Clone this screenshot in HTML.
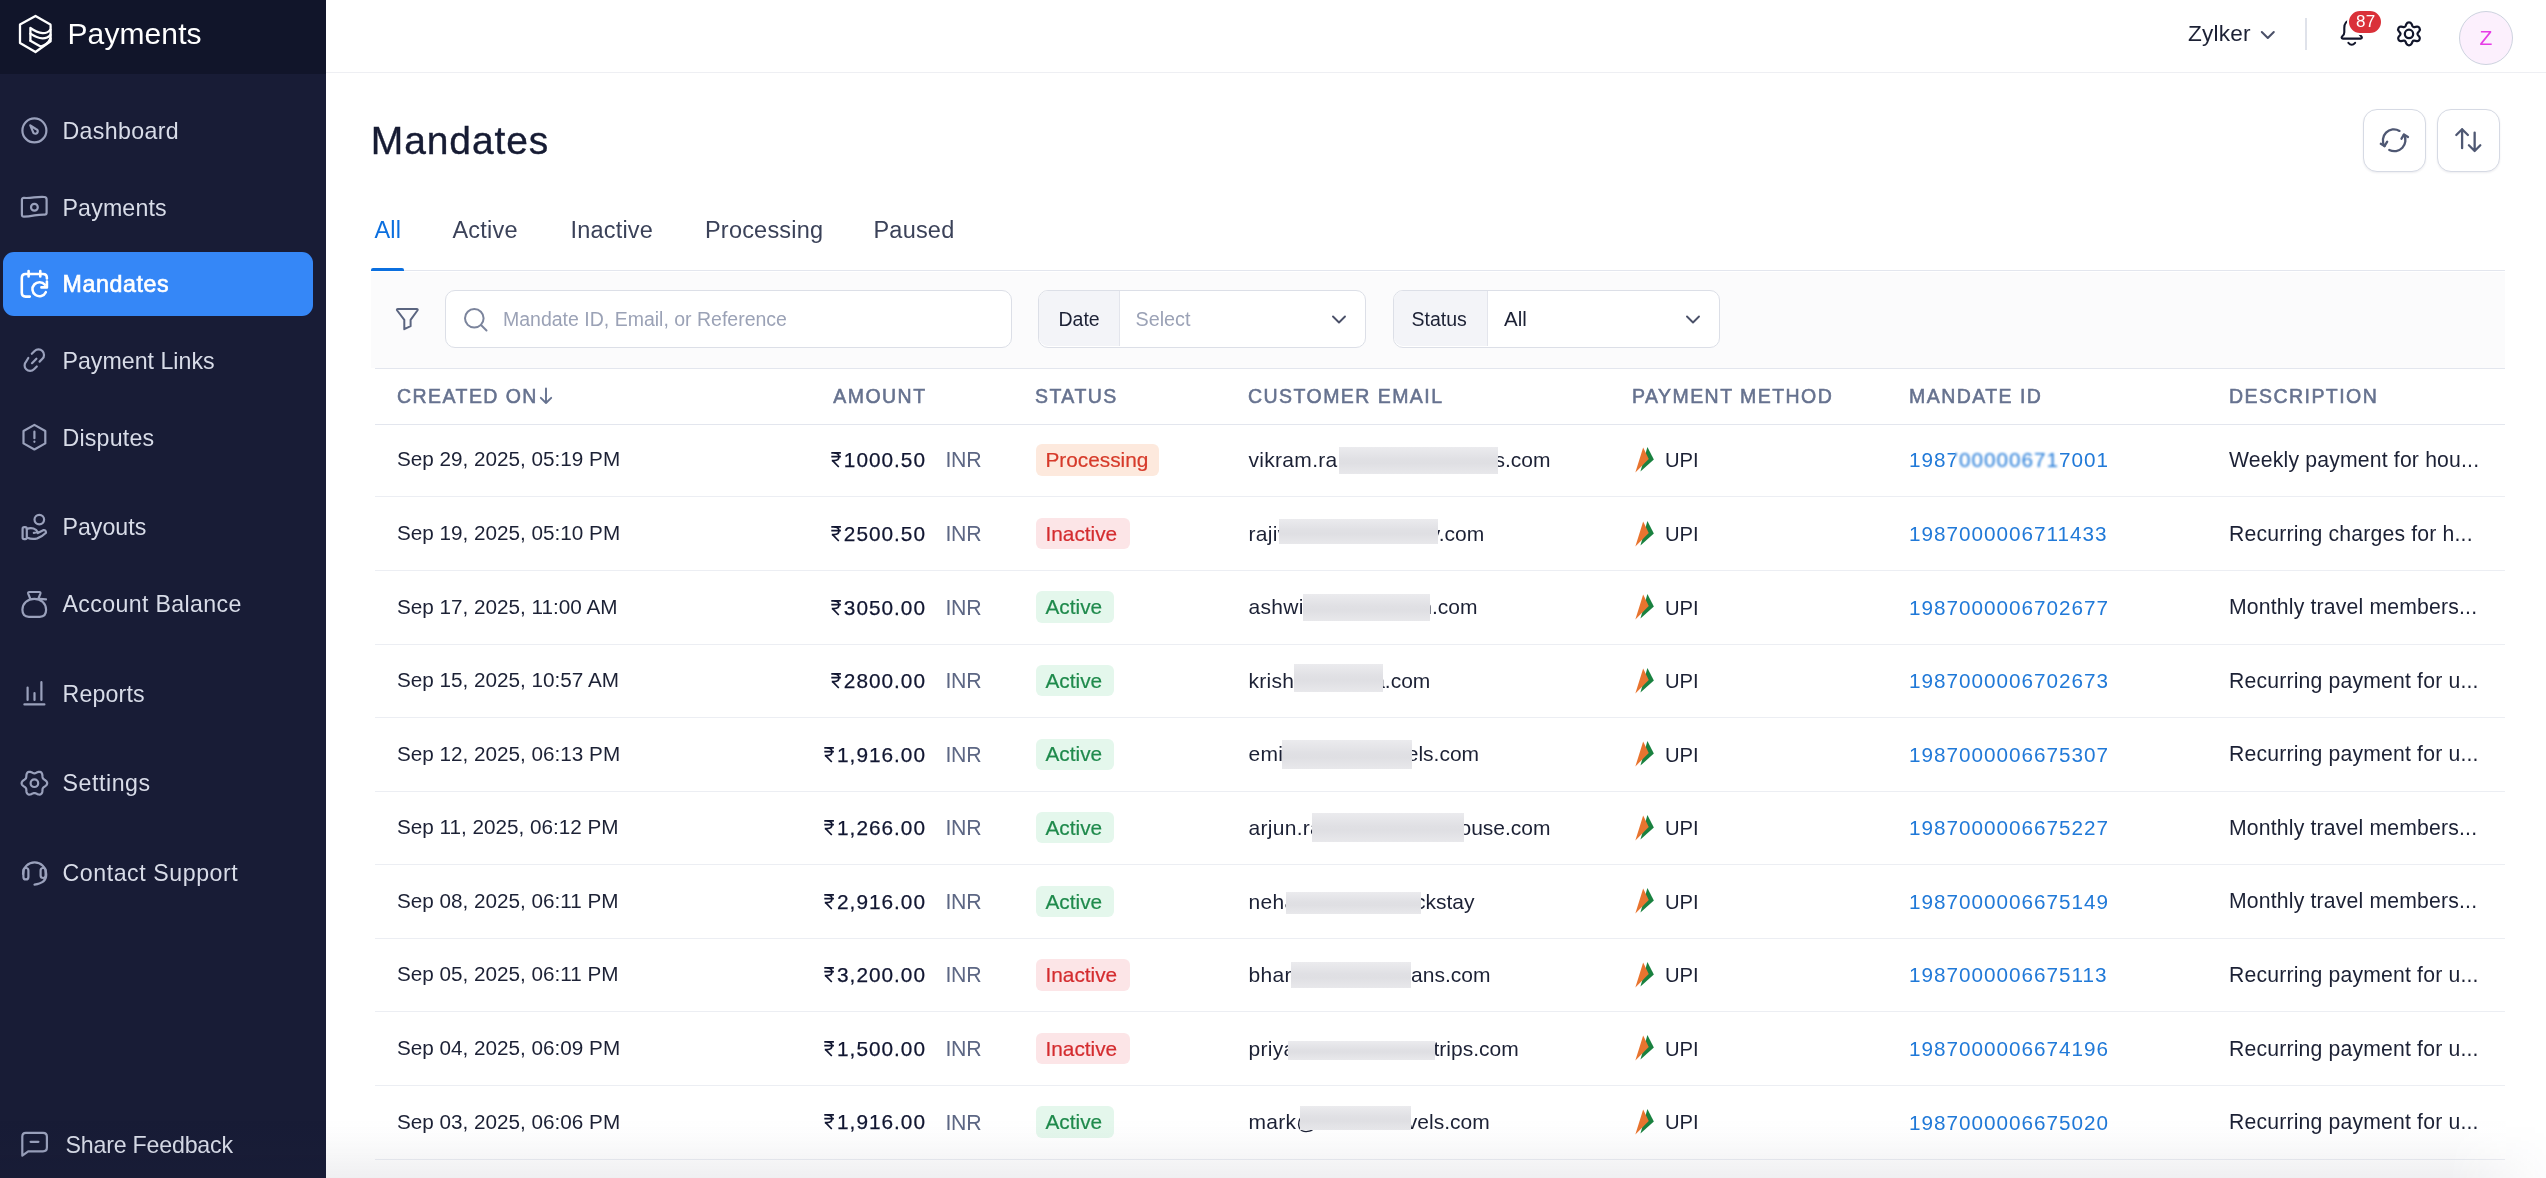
<!DOCTYPE html>
<html><head><meta charset="utf-8"><title>Mandates</title>
<style>
html,body{margin:0;padding:0;width:2546px;height:1178px;overflow:hidden;background:#fff;}
body{position:relative;font-family:"Liberation Sans", sans-serif;}
#w{position:absolute;left:0;top:0;width:2546px;height:1178px;overflow:hidden;will-change:transform;}
.a{position:absolute;}
.t{position:absolute;white-space:nowrap;line-height:1;}
svg.a{overflow:visible;}
</style></head><body><div id="w">
<div class="a" style="left:0.00px;top:0.00px;width:326.00px;height:1178.00px;background:#181c36;"></div>
<div class="a" style="left:0.00px;top:0.00px;width:326.00px;height:73.50px;background:#11152a;"></div>
<svg class="a" style="left:10px;top:8px;" width="50" height="50" viewBox="0 0 50 50"><g fill="none" stroke="#fff" stroke-width="2.3" stroke-linejoin="round" stroke-linecap="round">
<path d="M25.5 8 L40.4 16.6 Q40.6 17 40.6 18 L40.6 33.2 L25.5 44 L10 35 L10 16.6 Z"/>
<path d="M20.4 32.8 L20.4 20 Q27 24.6 32.6 25.2 Q37.4 25.4 40.4 21.6"/>
<path d="M20.4 25.6 Q27 30 32.6 30.4 Q37.6 30.4 40.4 27"/>
<path d="M20.4 32.8 Q25.5 35.8 30.6 38.5 Q38 36.5 40.4 30.5"/>
</g></svg>
<div class="t " style="left:67.50px;top:18.50px;font-size:30px;color:#ffffff;letter-spacing:0.1px;">Payments</div>
<div class="a" style="left:3.00px;top:252.00px;width:310.00px;height:64.00px;background:#3587f7;border-radius:11px;"></div>
<svg class="a" style="left:14px;top:110px;" width="40" height="40" viewBox="0 0 40 40"><g fill="none" stroke="#9aa1bc" stroke-width="2.2" stroke-linecap="round" stroke-linejoin="round"><circle cx="20.4" cy="20.4" r="12"/><path d="M16.3 15.3 L21.8 19 A2.4 2.4 0 1 1 19 21.9 Z"/></g></svg>
<div class="t " style="left:62.50px;top:119.66px;font-size:23.2px;color:#d8dce8;letter-spacing:0.35px;">Dashboard</div>
<svg class="a" style="left:14px;top:187px;" width="40" height="40" viewBox="0 0 40 40"><g fill="none" stroke="#9aa1bc" stroke-width="2.2" stroke-linecap="round" stroke-linejoin="round"><path d="M7.9 12.6 Q7.9 10.8 10 10.9 Q14 11.2 20 10.4 Q26 9.8 30.4 10 Q32.6 10.2 32.6 12.4 L32.6 25.8 Q32.6 27.6 30.6 27.6 Q26 27.5 20.5 28.3 Q14 29.6 10 29.7 Q7.9 29.8 7.9 27.6 Z"/><circle cx="20.4" cy="20.2" r="3.4"/></g></svg>
<div class="t " style="left:62.50px;top:196.56px;font-size:23.2px;color:#d8dce8;letter-spacing:0.15px;">Payments</div>
<svg class="a" style="left:14px;top:264px;" width="40" height="40" viewBox="0 0 40 40"><g fill="none" stroke="#ffffff" stroke-width="2.6" stroke-linecap="round" stroke-linejoin="round"><path d="M15.8 32.6 L11.6 32.6 Q7.8 32.6 7.8 28.8 L7.8 13.9 Q7.8 10 11.6 10 L29 10 Q32.9 10 32.9 13.9 L32.9 14.5 M14.6 7 L14.6 12.4 M26.3 7 L26.3 12.4"/><path d="M31.8 28.2 A7 7 0 1 1 30.9 20.8"/><path d="M32.9 17.6 L32.9 23.4 L27.4 23.4"/></g></svg>
<div class="t " style="left:62.50px;top:272.56px;font-size:23.2px;color:#ffffff;letter-spacing:0.6px;-webkit-text-stroke:0.65px #ffffff;">Mandates</div>
<svg class="a" style="left:14px;top:340px;" width="40" height="40" viewBox="0 0 40 40"><g fill="none" stroke="#9aa1bc" stroke-width="2.2" stroke-linecap="round" stroke-linejoin="round"><path d="M17.8 13.8 L20.6 11 A5.5 5.5 0 0 1 28.4 18.8 L25.6 21.6 M22.8 26.5 L20 29.3 A5.5 5.5 0 0 1 12.2 21.5 L14.3 18 M18 23.2 L22.4 18.7"/></g></svg>
<div class="t " style="left:62.50px;top:349.56px;font-size:23.2px;color:#d8dce8;">Payment Links</div>
<svg class="a" style="left:14px;top:417px;" width="40" height="40" viewBox="0 0 40 40"><g fill="none" stroke="#9aa1bc" stroke-width="2.2" stroke-linecap="round" stroke-linejoin="round"><path d="M20.4 7.9 L31.3 14 L31.3 26.4 L20.4 32.5 L9.5 26.4 L9.5 14 Z"/><path d="M20.4 14.6 L20.4 21.2 M20.4 24.6 L20.4 24.8"/></g></svg>
<div class="t " style="left:62.50px;top:426.56px;font-size:23.2px;color:#d8dce8;letter-spacing:0.2px;">Disputes</div>
<svg class="a" style="left:14px;top:507px;" width="40" height="40" viewBox="0 0 40 40"><g fill="none" stroke="#9aa1bc" stroke-width="2.2" stroke-linecap="round" stroke-linejoin="round"><circle cx="25.3" cy="12.6" r="4.8"/><rect x="8.6" y="20.1" width="4.2" height="12" rx="1.6"/><path d="M12.8 22 Q16 20.5 19.5 21.5 Q22.8 22.7 23.6 25 L19.8 25.8 M13.4 30.8 Q18 32.8 23.3 31.4 Q28 29.8 32 25.8 Q32 22.6 29.2 23.2 L23.8 26"/></g></svg>
<div class="t " style="left:62.50px;top:516.46px;font-size:23.2px;color:#d8dce8;">Payouts</div>
<svg class="a" style="left:14px;top:583px;" width="40" height="40" viewBox="0 0 40 40"><g fill="none" stroke="#9aa1bc" stroke-width="2.2" stroke-linecap="round" stroke-linejoin="round"><path d="M16.2 15.6 L14.2 10.6 Q13.8 9 15.4 9 L25.2 9 Q26.8 9 26.4 10.6 L24.4 15.6"/><path d="M14.8 33.8 Q8.4 33.8 8.4 26.8 C8.4 20.6 13.4 15.9 20.3 15.9 C27.2 15.9 32.1 20.6 32.1 26.8 Q32.1 33.8 25.8 33.8 Z M25.8 15.8 L32 16.4"/></g></svg>
<div class="t " style="left:62.50px;top:592.66px;font-size:23.2px;color:#d8dce8;letter-spacing:0.35px;">Account Balance</div>
<svg class="a" style="left:14px;top:673px;" width="40" height="40" viewBox="0 0 40 40"><g fill="none" stroke="#9aa1bc" stroke-width="2.2" stroke-linecap="round" stroke-linejoin="round"><path d="M13.6 14.5 L13.6 27 M20.5 20 L20.5 27 M27.4 9.2 L27.4 27 M10.4 31.4 L30.4 31.4"/></g></svg>
<div class="t " style="left:62.50px;top:682.66px;font-size:23.2px;color:#d8dce8;letter-spacing:0.15px;">Reports</div>
<svg class="a" style="left:14px;top:763px;" width="40" height="40" viewBox="0 0 40 40"><g fill="none" stroke="#9aa1bc" stroke-width="2.2" stroke-linecap="round" stroke-linejoin="round"><path d="M33.20 20.20 L32.95 21.30 L32.27 22.29 L31.31 23.12 L30.31 23.81 L29.46 24.43 L28.89 25.10 L28.59 25.94 L28.48 26.98 L28.39 28.19 L28.15 29.43 L27.63 30.52 L26.80 31.29 L25.72 31.62 L24.52 31.52 L23.32 31.11 L22.23 30.59 L21.27 30.16 L20.40 30.00 L19.53 30.16 L18.57 30.59 L17.48 31.11 L16.28 31.52 L15.08 31.62 L14.00 31.29 L13.17 30.52 L12.65 29.43 L12.41 28.19 L12.32 26.98 L12.21 25.94 L11.91 25.10 L11.34 24.43 L10.49 23.81 L9.49 23.12 L8.53 22.29 L7.85 21.30 L7.60 20.20 L7.85 19.10 L8.53 18.11 L9.49 17.28 L10.49 16.59 L11.34 15.97 L11.91 15.30 L12.21 14.46 L12.32 13.42 L12.41 12.21 L12.65 10.97 L13.17 9.88 L14.00 9.11 L15.08 8.78 L16.28 8.88 L17.48 9.29 L18.57 9.81 L19.53 10.24 L20.40 10.40 L21.27 10.24 L22.23 9.81 L23.32 9.29 L24.52 8.88 L25.72 8.78 L26.80 9.11 L27.63 9.88 L28.15 10.97 L28.39 12.21 L28.48 13.42 L28.59 14.46 L28.89 15.30 L29.46 15.97 L30.31 16.59 L31.31 17.28 L32.27 18.11 L32.95 19.10 L33.20 20.20 Z"/><circle cx="20.4" cy="20.2" r="3.8"/></g></svg>
<div class="t " style="left:62.50px;top:772.26px;font-size:23.2px;color:#d8dce8;letter-spacing:0.55px;">Settings</div>
<svg class="a" style="left:14px;top:852px;" width="40" height="40" viewBox="0 0 40 40"><g fill="none" stroke="#9aa1bc" stroke-width="2.2" stroke-linecap="round" stroke-linejoin="round"><path d="M9 22 A11.6 11.6 0 0 1 32.2 22 L32.2 23 Q32.2 31 20.5 32.6"/><rect x="9.4" y="16" width="5" height="11.4" rx="2.5"/><rect x="26.6" y="16" width="5" height="10" rx="2.5"/></g></svg>
<div class="t " style="left:62.50px;top:861.56px;font-size:23.2px;color:#d8dce8;letter-spacing:0.55px;">Contact Support</div>
<svg class="a" style="left:14px;top:1124px;" width="40" height="40" viewBox="0 0 40 40"><g fill="none" stroke="#9aa1bc" stroke-width="2.2" stroke-linecap="round" stroke-linejoin="round"><path d="M11.8 8.9 L29 8.9 Q32.9 8.9 32.9 12.8 L32.9 23.6 Q32.9 27.4 29 27.4 L14.2 27.4 L8.3 31.6 L8.3 12.8 Q8.3 8.9 11.8 8.9 Z"/><path d="M16.6 17.8 L24.4 17.8"/></g></svg>
<div class="t " style="left:65.50px;top:1133.66px;font-size:23.2px;color:#d8dce8;letter-spacing:-0.2px;">Share Feedback</div>
<div class="a" style="left:326.00px;top:0.00px;width:2220.00px;height:1178.00px;background:#ffffff;"></div>
<div class="a" style="left:326.00px;top:72.00px;width:2220.00px;height:1.00px;background:#eeeff3;"></div>
<div class="t " style="left:2188.00px;top:23.47px;font-size:22.6px;color:#1c2135;letter-spacing:0.2px;">Zylker</div>
<svg class="a" style="left:2258px;top:28px;" width="20" height="14" viewBox="0 0 20 14"><path d="M3.8 4 L9.8 10 L15.8 4" fill="none" stroke="#4a5068" stroke-width="2" stroke-linecap="round" stroke-linejoin="round"/></svg>
<div class="a" style="left:2305.00px;top:18.00px;width:1.50px;height:32.00px;background:#dfe2ea;"></div>
<svg class="a" style="left:2336px;top:14px;" width="32" height="34" viewBox="0 0 32 34"><g fill="none" stroke="#12162b" stroke-width="2.1" stroke-linecap="round" stroke-linejoin="round"><path d="M15.75 6 C10.5 6 8.3 10 8.3 14 L8.3 18.2 Q8.3 20.5 6.5 22 Q5.6 22.8 5.6 23.6 Q5.6 24.6 6.8 24.6 L24.7 24.6 Q25.9 24.6 25.9 23.6 Q25.9 22.8 25 22 Q23.2 20.5 23.2 18.2 L23.2 14 C23.2 10 21 6 15.75 6 Z"/><path d="M12.4 28.8 Q15.75 32.8 19.1 28.8"/></g></svg>
<div class="a" style="left:2347.00px;top:9.00px;width:36.00px;height:26.00px;background:#da3139;border-radius:13px;border:2px solid #fff;box-sizing:border-box;"></div>
<div class="t " style="left:2356.00px;top:12.61px;font-size:17px;color:#ffffff;letter-spacing:0.3px;">87</div>
<svg class="a" style="left:2393px;top:17px;transform:scale(1.07);transform-origin:16px 17px;" width="32" height="34" viewBox="0 0 32 34"><g fill="none" stroke="#12162b" stroke-width="2.1" stroke-linejoin="round"><path d="M13.6 5.4 Q14.3 4 16 4 Q17.7 4 18.4 5.4 L19.3 7.6 Q19.9 8.6 21 8.4 L23.4 8 Q25 7.8 25.8 9.2 Q26.6 10.6 25.7 11.9 L24.2 13.8 Q23.6 14.7 24.2 15.6 L25.7 17.5 Q26.6 18.8 25.8 20.2 Q25 21.6 23.4 21.4 L21 21 Q19.9 20.8 19.3 21.8 L18.4 24 Q17.7 25.4 16 25.4 Q14.3 25.4 13.6 24 L12.7 21.8 Q12.1 20.8 11 21 L8.6 21.4 Q7 21.6 6.2 20.2 Q5.4 18.8 6.3 17.5 L7.8 15.6 Q8.4 14.7 7.8 13.8 L6.3 11.9 Q5.4 10.6 6.2 9.2 Q7 7.8 8.6 8 L11 8.4 Q12.1 8.6 12.7 7.6 Z" transform="translate(0 2.2)"/><circle cx="16" cy="16.9" r="3.9"/></g></svg>
<div class="a" style="left:2459.00px;top:10.50px;width:54.00px;height:54.00px;background:#fcf0fd;border:1.2px solid #cdd3df;border-radius:50%;box-sizing:border-box;"></div>
<div class="t " style="left:2479.50px;top:26.72px;font-size:21px;color:#e63ce6;">Z</div>
<div class="t " style="left:370.80px;top:121.29px;font-size:39px;color:#161b33;letter-spacing:0.9px;-webkit-text-stroke:0.35px #161b33;">Mandates</div>
<div class="a" style="left:2362.50px;top:109.00px;width:63.40px;height:63.00px;background:#fff;border:1.6px solid #d6dae4;border-radius:14px;box-sizing:border-box;box-shadow:0 1px 2px rgba(20,30,60,0.08);"></div>
<div class="a" style="left:2436.80px;top:109.00px;width:63.40px;height:63.00px;background:#fff;border:1.6px solid #d6dae4;border-radius:14px;box-sizing:border-box;box-shadow:0 1px 2px rgba(20,30,60,0.08);"></div>
<svg class="a" style="left:2378px;top:124px;" width="34" height="34" viewBox="0 0 34 34"><g fill="none" stroke="#4f5873" stroke-width="2.3" stroke-linecap="round" stroke-linejoin="round"><path d="M21.5 6.9 A11 11 0 0 0 6.5 22.1"/><path d="M2.8 19.8 L6.5 22.1 L9.2 17.7"/><path d="M11.3 25.9 A11 11 0 0 0 25.9 10.6"/><path d="M23.5 14.7 L25.9 10.6 L30 13"/></g></svg>
<svg class="a" style="left:2452px;top:124px;" width="34" height="34" viewBox="0 0 34 34"><g fill="none" stroke="#4f5873" stroke-width="2.3" stroke-linecap="round" stroke-linejoin="round"><path d="M10.1 24.2 L10.1 5.2 M4.3 11 L10.1 5.2 L15.9 11"/><path d="M22.65 8.6 L22.65 27 M16.9 21.3 L22.65 27 L28.3 21.3"/></g></svg>
<div class="t " style="left:374.50px;top:219.31px;font-size:23.5px;color:#0b6fdf;letter-spacing:0.2px;">All</div>
<div class="t " style="left:452.50px;top:219.31px;font-size:23.5px;color:#3b4259;letter-spacing:0.2px;">Active</div>
<div class="t " style="left:570.50px;top:219.31px;font-size:23.5px;color:#3b4259;letter-spacing:0.2px;">Inactive</div>
<div class="t " style="left:705.00px;top:219.31px;font-size:23.5px;color:#3b4259;letter-spacing:0.2px;">Processing</div>
<div class="t " style="left:873.50px;top:219.31px;font-size:23.5px;color:#3b4259;letter-spacing:0.2px;">Paused</div>
<div class="a" style="left:371.00px;top:270.00px;width:2134.00px;height:1.20px;background:#e3e6ee;"></div>
<div class="a" style="left:371.00px;top:268.00px;width:33.00px;height:3.00px;background:#0b6fdf;border-radius:2px 2px 0 0;"></div>
<div class="a" style="left:371.00px;top:272.00px;width:2134.00px;height:96.00px;background:#fbfbfc;"></div>
<div class="a" style="left:375.00px;top:368.00px;width:2130.00px;height:1.30px;background:#e3e6ee;"></div>
<svg class="a" style="left:393px;top:304px;" width="28" height="30" viewBox="0 0 28 30"><path d="M5 5 H23.6 Q25.4 5 24.4 6.5 L17.6 15.8 V22.2 L11.3 25.2 V15.8 L4.2 6.5 Q3.2 5 5 5 Z" fill="none" stroke="#5b6580" stroke-width="2" stroke-linejoin="round"/></svg>
<div class="a" style="left:444.50px;top:290.00px;width:567.00px;height:57.50px;background:#fff;border:1.2px solid #dcdfe7;border-radius:10px;box-sizing:border-box;"></div>
<svg class="a" style="left:460px;top:304px;" width="32" height="32" viewBox="0 0 32 32"><g fill="none" stroke="#7b849c" stroke-width="2" stroke-linecap="round"><circle cx="14.3" cy="14.3" r="9.3"/><path d="M21 21 L26.5 26.5"/></g></svg>
<div class="t " style="left:503.00px;top:310.49px;font-size:19.5px;color:#9ba2b6;">Mandate ID, Email, or Reference</div>
<div class="a" style="left:1038.00px;top:290.00px;width:327.50px;height:57.50px;background:#fff;border:1.2px solid #dcdfe7;border-radius:10px;box-sizing:border-box;overflow:hidden;"></div>
<div class="a" style="left:1039.20px;top:291.20px;width:80.20px;height:55.10px;background:#f3f4f8;border-radius:9px 0 0 9px;border-right:1.2px solid #e3e5ec;"></div>
<div class="t " style="left:1058.50px;top:310.19px;font-size:19.5px;color:#1c2135;">Date</div>
<div class="t " style="left:1135.50px;top:309.94px;font-size:19.8px;color:#9ba2b6;">Select</div>
<svg class="a" style="left:1327px;top:311px;" width="24" height="18" viewBox="0 0 24 18"><path d="M6 5.5 L12 11.5 L18 5.5" fill="none" stroke="#4a5068" stroke-width="1.9" stroke-linecap="round" stroke-linejoin="round"/></svg>
<div class="a" style="left:1392.50px;top:290.00px;width:327.50px;height:57.50px;background:#fff;border:1.2px solid #dcdfe7;border-radius:10px;box-sizing:border-box;"></div>
<div class="a" style="left:1393.70px;top:291.20px;width:93.70px;height:55.10px;background:#f3f4f8;border-radius:9px 0 0 9px;border-right:1.2px solid #e3e5ec;"></div>
<div class="t " style="left:1411.50px;top:310.19px;font-size:19.5px;color:#1c2135;">Status</div>
<div class="t " style="left:1504.00px;top:309.35px;font-size:20.5px;color:#1c2135;">All</div>
<svg class="a" style="left:1681px;top:311px;" width="24" height="18" viewBox="0 0 24 18"><path d="M6 5.5 L12 11.5 L18 5.5" fill="none" stroke="#4a5068" stroke-width="1.9" stroke-linecap="round" stroke-linejoin="round"/></svg>
<div class="t " style="left:397.00px;top:387.09px;font-size:19.5px;color:#66728f;letter-spacing:1.45px;-webkit-text-stroke:0.55px #66728f;">CREATED ON</div>
<svg class="a" style="left:538px;top:386px;" width="16" height="20" viewBox="0 0 16 20"><path d="M8 2.5 L8 17 M2.8 11.8 L8 17 L13.2 11.8" fill="none" stroke="#66728f" stroke-width="1.9" stroke-linecap="round" stroke-linejoin="round"/></svg>
<div class="t" style="right:1619.50px;top:387.09px;font-size:19.5px;color:#66728f;letter-spacing:1.45px;-webkit-text-stroke:0.55px #66728f;">AMOUNT</div>
<div class="t " style="left:1035.00px;top:387.09px;font-size:19.5px;color:#66728f;letter-spacing:1.45px;-webkit-text-stroke:0.55px #66728f;">STATUS</div>
<div class="t " style="left:1248.00px;top:387.09px;font-size:19.5px;color:#66728f;letter-spacing:1.45px;-webkit-text-stroke:0.55px #66728f;">CUSTOMER EMAIL</div>
<div class="t " style="left:1632.00px;top:387.09px;font-size:19.5px;color:#66728f;letter-spacing:1.45px;-webkit-text-stroke:0.55px #66728f;">PAYMENT METHOD</div>
<div class="t " style="left:1909.00px;top:387.09px;font-size:19.5px;color:#66728f;letter-spacing:1.45px;-webkit-text-stroke:0.55px #66728f;">MANDATE ID</div>
<div class="t " style="left:2229.00px;top:387.09px;font-size:19.5px;color:#66728f;letter-spacing:1.45px;-webkit-text-stroke:0.55px #66728f;">DESCRIPTION</div>
<div class="a" style="left:375.00px;top:423.50px;width:2130.00px;height:1.40px;background:#e3e6ee;"></div>
<div class="t " style="left:397.00px;top:449.48px;font-size:20.7px;color:#1c2135;">Sep 29, 2025, 05:19 PM</div>
<div class="t" style="right:1620.00px;top:450.39px;font-size:20.8px;color:#111631;letter-spacing:1.0px;-webkit-text-stroke:0.25px #111631;"><svg width="10" height="15" viewBox="0 0 10 15" style="vertical-align:baseline;margin-right:3.2px;overflow:visible"><g fill="none" stroke="#111631" stroke-width="1.7" stroke-linecap="butt" stroke-linejoin="round"><path d="M0.3 0.9 H9.9 M0.3 4.7 H9.9"/><path d="M3.2 0.9 Q7.9 0.9 7.9 4.8 Q7.9 8.6 3.2 8.6 H0.8"/><path d="M1.6 8.7 L7.8 15"/></g></svg>1000.50</div>
<!--R0-->
<div class="t " style="left:945.50px;top:450.47px;font-size:21.3px;color:#5d6784;letter-spacing:-0.3px;">INR</div>
<div class="a" style="left:1036.00px;top:444.30px;width:123.00px;height:31.40px;background:#fde9dd;border-radius:6px;"></div>
<div class="t " style="left:1045.50px;top:450.19px;font-size:20.8px;color:#d63a2a;letter-spacing:0px;-webkit-text-stroke:0.2px #d63a2a;">Processing</div>
<div class="t " style="left:1248.50px;top:449.22px;font-size:21px;color:#1c2135;letter-spacing:0.3px;">vikram.ra</div>
<div class="t" style="right:995.50px;top:449.22px;font-size:21px;color:#1c2135;">s.com</div>
<div class="a" style="left:1339.00px;top:446.80px;width:159.00px;height:27.20px;background:linear-gradient(to bottom,#ebebee 0%,#e0e0e4 45%,#dfdfe3 60%,#e8e8eb 100%);"></div>
<svg class="a" style="left:1633px;top:445px;" width="24" height="28" viewBox="0 0 24 28"><path d="M14.4 2 L20.85 14.5 L7.45 26.6 Z" fill="#19813f"/><path d="M10.15 2.5 L15.75 14 L2.35 27.4 Z" fill="#e8742f"/></svg>
<div class="t " style="left:1665.00px;top:450.40px;font-size:20.2px;color:#1c2135;">UPI</div>
<div class="t " style="left:1909.00px;top:450.48px;font-size:20.7px;color:#2079d8;letter-spacing:1.0px;">1987000006717001</div>
<div class="a" style="left:1955.00px;top:443.50px;width:104.00px;height:26.00px;backdrop-filter:blur(0.8px);-webkit-backdrop-filter:blur(0.8px);"></div>
<div class="t " style="left:2229.00px;top:449.05px;font-size:21.2px;color:#1c2135;letter-spacing:0.18px;">Weekly payment for hou...</div>
<div class="a" style="left:375.00px;top:496.00px;width:2130.00px;height:1.00px;background:#eceef3;"></div>
<div class="t " style="left:397.00px;top:523.04px;font-size:20.7px;color:#1c2135;">Sep 19, 2025, 05:10 PM</div>
<div class="t" style="right:1620.00px;top:523.95px;font-size:20.8px;color:#111631;letter-spacing:1.0px;-webkit-text-stroke:0.25px #111631;"><svg width="10" height="15" viewBox="0 0 10 15" style="vertical-align:baseline;margin-right:3.2px;overflow:visible"><g fill="none" stroke="#111631" stroke-width="1.7" stroke-linecap="butt" stroke-linejoin="round"><path d="M0.3 0.9 H9.9 M0.3 4.7 H9.9"/><path d="M3.2 0.9 Q7.9 0.9 7.9 4.8 Q7.9 8.6 3.2 8.6 H0.8"/><path d="M1.6 8.7 L7.8 15"/></g></svg>2500.50</div>
<!--R1-->
<div class="t " style="left:945.50px;top:524.03px;font-size:21.3px;color:#5d6784;letter-spacing:-0.3px;">INR</div>
<div class="a" style="left:1036.00px;top:517.86px;width:94.00px;height:31.40px;background:#fce5e7;border-radius:6px;"></div>
<div class="t " style="left:1045.50px;top:523.75px;font-size:20.8px;color:#d42c2f;letter-spacing:0px;-webkit-text-stroke:0.2px #d42c2f;">Inactive</div>
<div class="t " style="left:1248.50px;top:522.78px;font-size:21px;color:#1c2135;letter-spacing:0.3px;">rajiv</div>
<div class="t" style="right:1061.80px;top:522.78px;font-size:21px;color:#1c2135;">v.com</div>
<div class="a" style="left:1279.00px;top:519.20px;width:159.00px;height:24.50px;background:linear-gradient(to bottom,#ebebee 0%,#e0e0e4 45%,#dfdfe3 60%,#e8e8eb 100%);"></div>
<svg class="a" style="left:1633px;top:519px;" width="24" height="28" viewBox="0 0 24 28"><path d="M14.4 2 L20.85 14.5 L7.45 26.6 Z" fill="#19813f"/><path d="M10.15 2.5 L15.75 14 L2.35 27.4 Z" fill="#e8742f"/></svg>
<div class="t " style="left:1665.00px;top:523.96px;font-size:20.2px;color:#1c2135;">UPI</div>
<div class="t " style="left:1909.00px;top:524.04px;font-size:20.7px;color:#2079d8;letter-spacing:1.0px;">1987000006711433</div>
<div class="t " style="left:2229.00px;top:522.61px;font-size:21.2px;color:#1c2135;letter-spacing:0.18px;">Recurring charges for h...</div>
<div class="a" style="left:375.00px;top:570.00px;width:2130.00px;height:1.00px;background:#eceef3;"></div>
<div class="t " style="left:397.00px;top:596.60px;font-size:20.7px;color:#1c2135;">Sep 17, 2025, 11:00 AM</div>
<div class="t" style="right:1620.00px;top:597.51px;font-size:20.8px;color:#111631;letter-spacing:1.0px;-webkit-text-stroke:0.25px #111631;"><svg width="10" height="15" viewBox="0 0 10 15" style="vertical-align:baseline;margin-right:3.2px;overflow:visible"><g fill="none" stroke="#111631" stroke-width="1.7" stroke-linecap="butt" stroke-linejoin="round"><path d="M0.3 0.9 H9.9 M0.3 4.7 H9.9"/><path d="M3.2 0.9 Q7.9 0.9 7.9 4.8 Q7.9 8.6 3.2 8.6 H0.8"/><path d="M1.6 8.7 L7.8 15"/></g></svg>3050.00</div>
<!--R2-->
<div class="t " style="left:945.50px;top:597.59px;font-size:21.3px;color:#5d6784;letter-spacing:-0.3px;">INR</div>
<div class="a" style="left:1036.00px;top:591.42px;width:78.00px;height:31.40px;background:#e4f7ec;border-radius:6px;"></div>
<div class="t " style="left:1045.50px;top:597.31px;font-size:20.8px;color:#1f8a4c;letter-spacing:0px;-webkit-text-stroke:0.2px #1f8a4c;">Active</div>
<div class="t " style="left:1248.50px;top:596.34px;font-size:21px;color:#1c2135;letter-spacing:0.3px;">ashwi</div>
<div class="t" style="right:1068.60px;top:596.34px;font-size:21px;color:#1c2135;">n.com</div>
<div class="a" style="left:1303.00px;top:594.20px;width:126.50px;height:27.10px;background:linear-gradient(to bottom,#ebebee 0%,#e0e0e4 45%,#dfdfe3 60%,#e8e8eb 100%);"></div>
<svg class="a" style="left:1633px;top:592px;" width="24" height="28" viewBox="0 0 24 28"><path d="M14.4 2 L20.85 14.5 L7.45 26.6 Z" fill="#19813f"/><path d="M10.15 2.5 L15.75 14 L2.35 27.4 Z" fill="#e8742f"/></svg>
<div class="t " style="left:1665.00px;top:597.52px;font-size:20.2px;color:#1c2135;">UPI</div>
<div class="t " style="left:1909.00px;top:597.60px;font-size:20.7px;color:#2079d8;letter-spacing:1.0px;">1987000006702677</div>
<div class="t " style="left:2229.00px;top:596.17px;font-size:21.2px;color:#1c2135;letter-spacing:0.18px;">Monthly travel members...</div>
<div class="a" style="left:375.00px;top:644.00px;width:2130.00px;height:1.00px;background:#eceef3;"></div>
<div class="t " style="left:397.00px;top:670.16px;font-size:20.7px;color:#1c2135;">Sep 15, 2025, 10:57 AM</div>
<div class="t" style="right:1620.00px;top:671.07px;font-size:20.8px;color:#111631;letter-spacing:1.0px;-webkit-text-stroke:0.25px #111631;"><svg width="10" height="15" viewBox="0 0 10 15" style="vertical-align:baseline;margin-right:3.2px;overflow:visible"><g fill="none" stroke="#111631" stroke-width="1.7" stroke-linecap="butt" stroke-linejoin="round"><path d="M0.3 0.9 H9.9 M0.3 4.7 H9.9"/><path d="M3.2 0.9 Q7.9 0.9 7.9 4.8 Q7.9 8.6 3.2 8.6 H0.8"/><path d="M1.6 8.7 L7.8 15"/></g></svg>2800.00</div>
<!--R3-->
<div class="t " style="left:945.50px;top:671.15px;font-size:21.3px;color:#5d6784;letter-spacing:-0.3px;">INR</div>
<div class="a" style="left:1036.00px;top:664.98px;width:78.00px;height:31.40px;background:#e4f7ec;border-radius:6px;"></div>
<div class="t " style="left:1045.50px;top:670.87px;font-size:20.8px;color:#1f8a4c;letter-spacing:0px;-webkit-text-stroke:0.2px #1f8a4c;">Active</div>
<div class="t " style="left:1248.50px;top:669.90px;font-size:21px;color:#1c2135;letter-spacing:0.3px;">krish</div>
<div class="t" style="right:1115.70px;top:669.90px;font-size:21px;color:#1c2135;">a.com</div>
<div class="a" style="left:1294.00px;top:664.20px;width:88.60px;height:28.20px;background:linear-gradient(to bottom,#ebebee 0%,#e0e0e4 45%,#dfdfe3 60%,#e8e8eb 100%);"></div>
<svg class="a" style="left:1633px;top:666px;" width="24" height="28" viewBox="0 0 24 28"><path d="M14.4 2 L20.85 14.5 L7.45 26.6 Z" fill="#19813f"/><path d="M10.15 2.5 L15.75 14 L2.35 27.4 Z" fill="#e8742f"/></svg>
<div class="t " style="left:1665.00px;top:671.08px;font-size:20.2px;color:#1c2135;">UPI</div>
<div class="t " style="left:1909.00px;top:671.16px;font-size:20.7px;color:#2079d8;letter-spacing:1.0px;">1987000006702673</div>
<div class="t " style="left:2229.00px;top:669.73px;font-size:21.2px;color:#1c2135;letter-spacing:0.18px;">Recurring payment for u...</div>
<div class="a" style="left:375.00px;top:717.00px;width:2130.00px;height:1.00px;background:#eceef3;"></div>
<div class="t " style="left:397.00px;top:743.72px;font-size:20.7px;color:#1c2135;">Sep 12, 2025, 06:13 PM</div>
<div class="t" style="right:1620.00px;top:744.63px;font-size:20.8px;color:#111631;letter-spacing:1.0px;-webkit-text-stroke:0.25px #111631;"><svg width="10" height="15" viewBox="0 0 10 15" style="vertical-align:baseline;margin-right:3.2px;overflow:visible"><g fill="none" stroke="#111631" stroke-width="1.7" stroke-linecap="butt" stroke-linejoin="round"><path d="M0.3 0.9 H9.9 M0.3 4.7 H9.9"/><path d="M3.2 0.9 Q7.9 0.9 7.9 4.8 Q7.9 8.6 3.2 8.6 H0.8"/><path d="M1.6 8.7 L7.8 15"/></g></svg>1,916.00</div>
<!--R4-->
<div class="t " style="left:945.50px;top:744.71px;font-size:21.3px;color:#5d6784;letter-spacing:-0.3px;">INR</div>
<div class="a" style="left:1036.00px;top:738.54px;width:78.00px;height:31.40px;background:#e4f7ec;border-radius:6px;"></div>
<div class="t " style="left:1045.50px;top:744.43px;font-size:20.8px;color:#1f8a4c;letter-spacing:0px;-webkit-text-stroke:0.2px #1f8a4c;">Active</div>
<div class="t " style="left:1248.50px;top:743.46px;font-size:21px;color:#1c2135;letter-spacing:0.3px;">emi</div>
<div class="t" style="right:1066.90px;top:743.46px;font-size:21px;color:#1c2135;">els.com</div>
<div class="a" style="left:1282.40px;top:740.20px;width:130.10px;height:28.60px;background:linear-gradient(to bottom,#ebebee 0%,#e0e0e4 45%,#dfdfe3 60%,#e8e8eb 100%);"></div>
<svg class="a" style="left:1633px;top:739px;" width="24" height="28" viewBox="0 0 24 28"><path d="M14.4 2 L20.85 14.5 L7.45 26.6 Z" fill="#19813f"/><path d="M10.15 2.5 L15.75 14 L2.35 27.4 Z" fill="#e8742f"/></svg>
<div class="t " style="left:1665.00px;top:744.64px;font-size:20.2px;color:#1c2135;">UPI</div>
<div class="t " style="left:1909.00px;top:744.72px;font-size:20.7px;color:#2079d8;letter-spacing:1.0px;">1987000006675307</div>
<div class="t " style="left:2229.00px;top:743.29px;font-size:21.2px;color:#1c2135;letter-spacing:0.18px;">Recurring payment for u...</div>
<div class="a" style="left:375.00px;top:791.00px;width:2130.00px;height:1.00px;background:#eceef3;"></div>
<div class="t " style="left:397.00px;top:817.28px;font-size:20.7px;color:#1c2135;">Sep 11, 2025, 06:12 PM</div>
<div class="t" style="right:1620.00px;top:818.19px;font-size:20.8px;color:#111631;letter-spacing:1.0px;-webkit-text-stroke:0.25px #111631;"><svg width="10" height="15" viewBox="0 0 10 15" style="vertical-align:baseline;margin-right:3.2px;overflow:visible"><g fill="none" stroke="#111631" stroke-width="1.7" stroke-linecap="butt" stroke-linejoin="round"><path d="M0.3 0.9 H9.9 M0.3 4.7 H9.9"/><path d="M3.2 0.9 Q7.9 0.9 7.9 4.8 Q7.9 8.6 3.2 8.6 H0.8"/><path d="M1.6 8.7 L7.8 15"/></g></svg>1,266.00</div>
<!--R5-->
<div class="t " style="left:945.50px;top:818.27px;font-size:21.3px;color:#5d6784;letter-spacing:-0.3px;">INR</div>
<div class="a" style="left:1036.00px;top:812.10px;width:78.00px;height:31.40px;background:#e4f7ec;border-radius:6px;"></div>
<div class="t " style="left:1045.50px;top:817.99px;font-size:20.8px;color:#1f8a4c;letter-spacing:0px;-webkit-text-stroke:0.2px #1f8a4c;">Active</div>
<div class="t " style="left:1248.50px;top:817.02px;font-size:21px;color:#1c2135;letter-spacing:0.3px;">arjun.ra</div>
<div class="t" style="right:995.50px;top:817.02px;font-size:21px;color:#1c2135;">ouse.com</div>
<div class="a" style="left:1312.10px;top:813.30px;width:151.70px;height:28.30px;background:linear-gradient(to bottom,#ebebee 0%,#e0e0e4 45%,#dfdfe3 60%,#e8e8eb 100%);"></div>
<svg class="a" style="left:1633px;top:813px;" width="24" height="28" viewBox="0 0 24 28"><path d="M14.4 2 L20.85 14.5 L7.45 26.6 Z" fill="#19813f"/><path d="M10.15 2.5 L15.75 14 L2.35 27.4 Z" fill="#e8742f"/></svg>
<div class="t " style="left:1665.00px;top:818.20px;font-size:20.2px;color:#1c2135;">UPI</div>
<div class="t " style="left:1909.00px;top:818.28px;font-size:20.7px;color:#2079d8;letter-spacing:1.0px;">1987000006675227</div>
<div class="t " style="left:2229.00px;top:816.85px;font-size:21.2px;color:#1c2135;letter-spacing:0.18px;">Monthly travel members...</div>
<div class="a" style="left:375.00px;top:864.00px;width:2130.00px;height:1.00px;background:#eceef3;"></div>
<div class="t " style="left:397.00px;top:890.84px;font-size:20.7px;color:#1c2135;">Sep 08, 2025, 06:11 PM</div>
<div class="t" style="right:1620.00px;top:891.75px;font-size:20.8px;color:#111631;letter-spacing:1.0px;-webkit-text-stroke:0.25px #111631;"><svg width="10" height="15" viewBox="0 0 10 15" style="vertical-align:baseline;margin-right:3.2px;overflow:visible"><g fill="none" stroke="#111631" stroke-width="1.7" stroke-linecap="butt" stroke-linejoin="round"><path d="M0.3 0.9 H9.9 M0.3 4.7 H9.9"/><path d="M3.2 0.9 Q7.9 0.9 7.9 4.8 Q7.9 8.6 3.2 8.6 H0.8"/><path d="M1.6 8.7 L7.8 15"/></g></svg>2,916.00</div>
<!--R6-->
<div class="t " style="left:945.50px;top:891.83px;font-size:21.3px;color:#5d6784;letter-spacing:-0.3px;">INR</div>
<div class="a" style="left:1036.00px;top:885.66px;width:78.00px;height:31.40px;background:#e4f7ec;border-radius:6px;"></div>
<div class="t " style="left:1045.50px;top:891.55px;font-size:20.8px;color:#1f8a4c;letter-spacing:0px;-webkit-text-stroke:0.2px #1f8a4c;">Active</div>
<div class="t " style="left:1248.50px;top:890.58px;font-size:21px;color:#1c2135;letter-spacing:0.3px;">neha</div>
<div class="t" style="right:1071.50px;top:890.58px;font-size:21px;color:#1c2135;">ckstay</div>
<div class="a" style="left:1286.00px;top:891.80px;width:135.00px;height:22.00px;background:linear-gradient(to bottom,#ebebee 0%,#e0e0e4 45%,#dfdfe3 60%,#e8e8eb 100%);"></div>
<svg class="a" style="left:1633px;top:886px;" width="24" height="28" viewBox="0 0 24 28"><path d="M14.4 2 L20.85 14.5 L7.45 26.6 Z" fill="#19813f"/><path d="M10.15 2.5 L15.75 14 L2.35 27.4 Z" fill="#e8742f"/></svg>
<div class="t " style="left:1665.00px;top:891.76px;font-size:20.2px;color:#1c2135;">UPI</div>
<div class="t " style="left:1909.00px;top:891.84px;font-size:20.7px;color:#2079d8;letter-spacing:1.0px;">1987000006675149</div>
<div class="t " style="left:2229.00px;top:890.41px;font-size:21.2px;color:#1c2135;letter-spacing:0.18px;">Monthly travel members...</div>
<div class="a" style="left:375.00px;top:938.00px;width:2130.00px;height:1.00px;background:#eceef3;"></div>
<div class="t " style="left:397.00px;top:964.40px;font-size:20.7px;color:#1c2135;">Sep 05, 2025, 06:11 PM</div>
<div class="t" style="right:1620.00px;top:965.31px;font-size:20.8px;color:#111631;letter-spacing:1.0px;-webkit-text-stroke:0.25px #111631;"><svg width="10" height="15" viewBox="0 0 10 15" style="vertical-align:baseline;margin-right:3.2px;overflow:visible"><g fill="none" stroke="#111631" stroke-width="1.7" stroke-linecap="butt" stroke-linejoin="round"><path d="M0.3 0.9 H9.9 M0.3 4.7 H9.9"/><path d="M3.2 0.9 Q7.9 0.9 7.9 4.8 Q7.9 8.6 3.2 8.6 H0.8"/><path d="M1.6 8.7 L7.8 15"/></g></svg>3,200.00</div>
<!--R7-->
<div class="t " style="left:945.50px;top:965.39px;font-size:21.3px;color:#5d6784;letter-spacing:-0.3px;">INR</div>
<div class="a" style="left:1036.00px;top:959.22px;width:94.00px;height:31.40px;background:#fce5e7;border-radius:6px;"></div>
<div class="t " style="left:1045.50px;top:965.11px;font-size:20.8px;color:#d42c2f;letter-spacing:0px;-webkit-text-stroke:0.2px #d42c2f;">Inactive</div>
<div class="t " style="left:1248.50px;top:964.14px;font-size:21px;color:#1c2135;letter-spacing:0.3px;">bhara</div>
<div class="t" style="right:1055.60px;top:964.14px;font-size:21px;color:#1c2135;">rans.com</div>
<div class="a" style="left:1290.90px;top:962.30px;width:119.90px;height:25.50px;background:linear-gradient(to bottom,#ebebee 0%,#e0e0e4 45%,#dfdfe3 60%,#e8e8eb 100%);"></div>
<svg class="a" style="left:1633px;top:960px;" width="24" height="28" viewBox="0 0 24 28"><path d="M14.4 2 L20.85 14.5 L7.45 26.6 Z" fill="#19813f"/><path d="M10.15 2.5 L15.75 14 L2.35 27.4 Z" fill="#e8742f"/></svg>
<div class="t " style="left:1665.00px;top:965.32px;font-size:20.2px;color:#1c2135;">UPI</div>
<div class="t " style="left:1909.00px;top:965.40px;font-size:20.7px;color:#2079d8;letter-spacing:1.0px;">1987000006675113</div>
<div class="t " style="left:2229.00px;top:963.97px;font-size:21.2px;color:#1c2135;letter-spacing:0.18px;">Recurring payment for u...</div>
<div class="a" style="left:375.00px;top:1011.00px;width:2130.00px;height:1.00px;background:#eceef3;"></div>
<div class="t " style="left:397.00px;top:1037.96px;font-size:20.7px;color:#1c2135;">Sep 04, 2025, 06:09 PM</div>
<div class="t" style="right:1620.00px;top:1038.87px;font-size:20.8px;color:#111631;letter-spacing:1.0px;-webkit-text-stroke:0.25px #111631;"><svg width="10" height="15" viewBox="0 0 10 15" style="vertical-align:baseline;margin-right:3.2px;overflow:visible"><g fill="none" stroke="#111631" stroke-width="1.7" stroke-linecap="butt" stroke-linejoin="round"><path d="M0.3 0.9 H9.9 M0.3 4.7 H9.9"/><path d="M3.2 0.9 Q7.9 0.9 7.9 4.8 Q7.9 8.6 3.2 8.6 H0.8"/><path d="M1.6 8.7 L7.8 15"/></g></svg>1,500.00</div>
<!--R8-->
<div class="t " style="left:945.50px;top:1038.95px;font-size:21.3px;color:#5d6784;letter-spacing:-0.3px;">INR</div>
<div class="a" style="left:1036.00px;top:1032.78px;width:94.00px;height:31.40px;background:#fce5e7;border-radius:6px;"></div>
<div class="t " style="left:1045.50px;top:1038.67px;font-size:20.8px;color:#d42c2f;letter-spacing:0px;-webkit-text-stroke:0.2px #d42c2f;">Inactive</div>
<div class="t " style="left:1248.50px;top:1037.70px;font-size:21px;color:#1c2135;letter-spacing:0.3px;">priya</div>
<div class="t" style="right:1027.30px;top:1037.70px;font-size:21px;color:#1c2135;">trips.com</div>
<div class="a" style="left:1288.10px;top:1041.30px;width:146.80px;height:18.40px;background:linear-gradient(to bottom,#ebebee 0%,#e0e0e4 45%,#dfdfe3 60%,#e8e8eb 100%);"></div>
<svg class="a" style="left:1633px;top:1033px;" width="24" height="28" viewBox="0 0 24 28"><path d="M14.4 2 L20.85 14.5 L7.45 26.6 Z" fill="#19813f"/><path d="M10.15 2.5 L15.75 14 L2.35 27.4 Z" fill="#e8742f"/></svg>
<div class="t " style="left:1665.00px;top:1038.88px;font-size:20.2px;color:#1c2135;">UPI</div>
<div class="t " style="left:1909.00px;top:1038.96px;font-size:20.7px;color:#2079d8;letter-spacing:1.0px;">1987000006674196</div>
<div class="t " style="left:2229.00px;top:1037.53px;font-size:21.2px;color:#1c2135;letter-spacing:0.18px;">Recurring payment for u...</div>
<div class="a" style="left:375.00px;top:1085.00px;width:2130.00px;height:1.00px;background:#eceef3;"></div>
<div class="t " style="left:397.00px;top:1111.52px;font-size:20.7px;color:#1c2135;">Sep 03, 2025, 06:06 PM</div>
<div class="t" style="right:1620.00px;top:1112.43px;font-size:20.8px;color:#111631;letter-spacing:1.0px;-webkit-text-stroke:0.25px #111631;"><svg width="10" height="15" viewBox="0 0 10 15" style="vertical-align:baseline;margin-right:3.2px;overflow:visible"><g fill="none" stroke="#111631" stroke-width="1.7" stroke-linecap="butt" stroke-linejoin="round"><path d="M0.3 0.9 H9.9 M0.3 4.7 H9.9"/><path d="M3.2 0.9 Q7.9 0.9 7.9 4.8 Q7.9 8.6 3.2 8.6 H0.8"/><path d="M1.6 8.7 L7.8 15"/></g></svg>1,916.00</div>
<!--R9-->
<div class="t " style="left:945.50px;top:1112.51px;font-size:21.3px;color:#5d6784;letter-spacing:-0.3px;">INR</div>
<div class="a" style="left:1036.00px;top:1106.34px;width:78.00px;height:31.40px;background:#e4f7ec;border-radius:6px;"></div>
<div class="t " style="left:1045.50px;top:1112.23px;font-size:20.8px;color:#1f8a4c;letter-spacing:0px;-webkit-text-stroke:0.2px #1f8a4c;">Active</div>
<div class="t " style="left:1248.50px;top:1111.26px;font-size:21px;color:#1c2135;letter-spacing:0.3px;">mark@</div>
<div class="t" style="right:1056.30px;top:1111.26px;font-size:21px;color:#1c2135;">avels.com</div>
<div class="a" style="left:1300.10px;top:1106.20px;width:110.70px;height:23.60px;background:linear-gradient(to bottom,#ebebee 0%,#e0e0e4 45%,#dfdfe3 60%,#e8e8eb 100%);"></div>
<svg class="a" style="left:1633px;top:1107px;" width="24" height="28" viewBox="0 0 24 28"><path d="M14.4 2 L20.85 14.5 L7.45 26.6 Z" fill="#19813f"/><path d="M10.15 2.5 L15.75 14 L2.35 27.4 Z" fill="#e8742f"/></svg>
<div class="t " style="left:1665.00px;top:1112.44px;font-size:20.2px;color:#1c2135;">UPI</div>
<div class="t " style="left:1909.00px;top:1112.52px;font-size:20.7px;color:#2079d8;letter-spacing:1.0px;">1987000006675020</div>
<div class="t " style="left:2229.00px;top:1111.09px;font-size:21.2px;color:#1c2135;letter-spacing:0.18px;">Recurring payment for u...</div>
<div class="a" style="left:375.00px;top:1159.00px;width:2130.00px;height:1.00px;background:#eceef3;"></div>
<div class="a" style="left:0.00px;top:1118.00px;width:2546.00px;height:60.00px;background:linear-gradient(to bottom, rgba(30,35,60,0) 0%, rgba(30,35,60,0.012) 30%, rgba(30,35,60,0.035) 60%, rgba(30,35,60,0.07) 100%);-webkit-mask-image:linear-gradient(to right,#000 0,#000 2450px,rgba(0,0,0,0.15) 2546px);mask-image:linear-gradient(to right,#000 0,#000 2450px,rgba(0,0,0,0.15) 2546px);"></div>
</div></body></html>
